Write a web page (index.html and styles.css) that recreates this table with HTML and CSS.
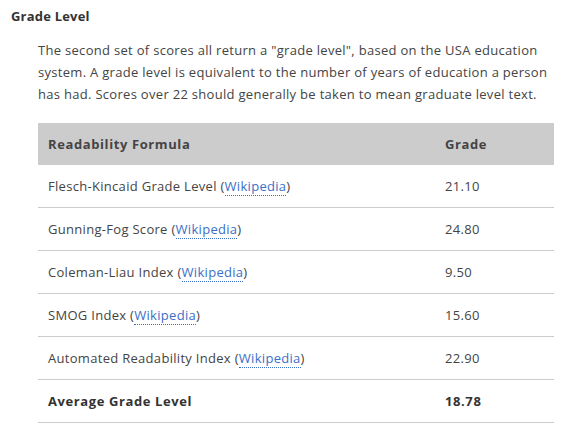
FILE: index.html
```html
<!DOCTYPE html>
<html>
<head>
<meta charset="utf-8">
<link rel="stylesheet" href="styles.css">
</head>
<body>
<section class="panel">
  <h2 class="title">Grade Level</h2>
  <div class="content">
    <p class="intro">The second set of scores all return a "grade level", based on the USA education system. A grade level is equivalent to the number of years of education a person has had. Scores over 22 should generally be taken to mean graduate level text.</p>
    <table class="scores">
      <thead>
        <tr><th class="col-name">Readability Formula</th><th class="col-grade">Grade</th></tr>
      </thead>
      <tbody>
        <tr><td>Flesch-Kincaid Grade Level (<a href="#">Wikipedia</a>)</td><td>21.10</td></tr>
        <tr><td>Gunning-Fog Score (<a href="#">Wikipedia</a>)</td><td>24.80</td></tr>
        <tr><td>Coleman-Liau Index (<a href="#">Wikipedia</a>)</td><td>9.50</td></tr>
        <tr><td>SMOG Index (<a href="#">Wikipedia</a>)</td><td>15.60</td></tr>
        <tr><td>Automated Readability Index (<a href="#">Wikipedia</a>)</td><td>22.90</td></tr>
        <tr class="avg"><td>Average Grade Level</td><td>18.78</td></tr>
      </tbody>
    </table>
  </div>
</section>
</body>
</html>
```
FILE: styles.css
```css
html, body {
  margin: 0;
  padding: 0;
  background: #fff;
}
body {
  font-family: "Open Sans", "DejaVu Sans", sans-serif;
  font-size: 13px;
  color: #444;
  letter-spacing: 0.3px;
}
.panel {
  padding: 6px 20px 0 11px;
}
.title {
  margin: 0;
  font-size: 13px;
  font-weight: bold;
  color: #333;
  line-height: 20px;
  letter-spacing: 0.2px;
}
.content {
  padding: 13px 0 0 27px;
}
.intro {
  margin: 0 0 18px 0;
  line-height: 22px;
  width: 516px;
}
.scores {
  width: 516px;
  border-collapse: collapse;
}
.scores th {
  background: #ccc;
  text-align: left;
  font-weight: bold;
  color: #444;
  height: 42px;
  padding: 0 10px;
  letter-spacing: 0.6px;
}
.scores td {
  height: 42px;
  padding: 0 10px;
  border-bottom: 1px solid #ccc;
}
.col-name { width: 377px; }
.scores a {
  color: #3a6fc8;
  text-decoration: none;
  border-bottom: 1px dotted #3a6fc8;
}
.avg td {
  font-weight: bold;
  letter-spacing: 0.6px;
  color: #333;
}
```
